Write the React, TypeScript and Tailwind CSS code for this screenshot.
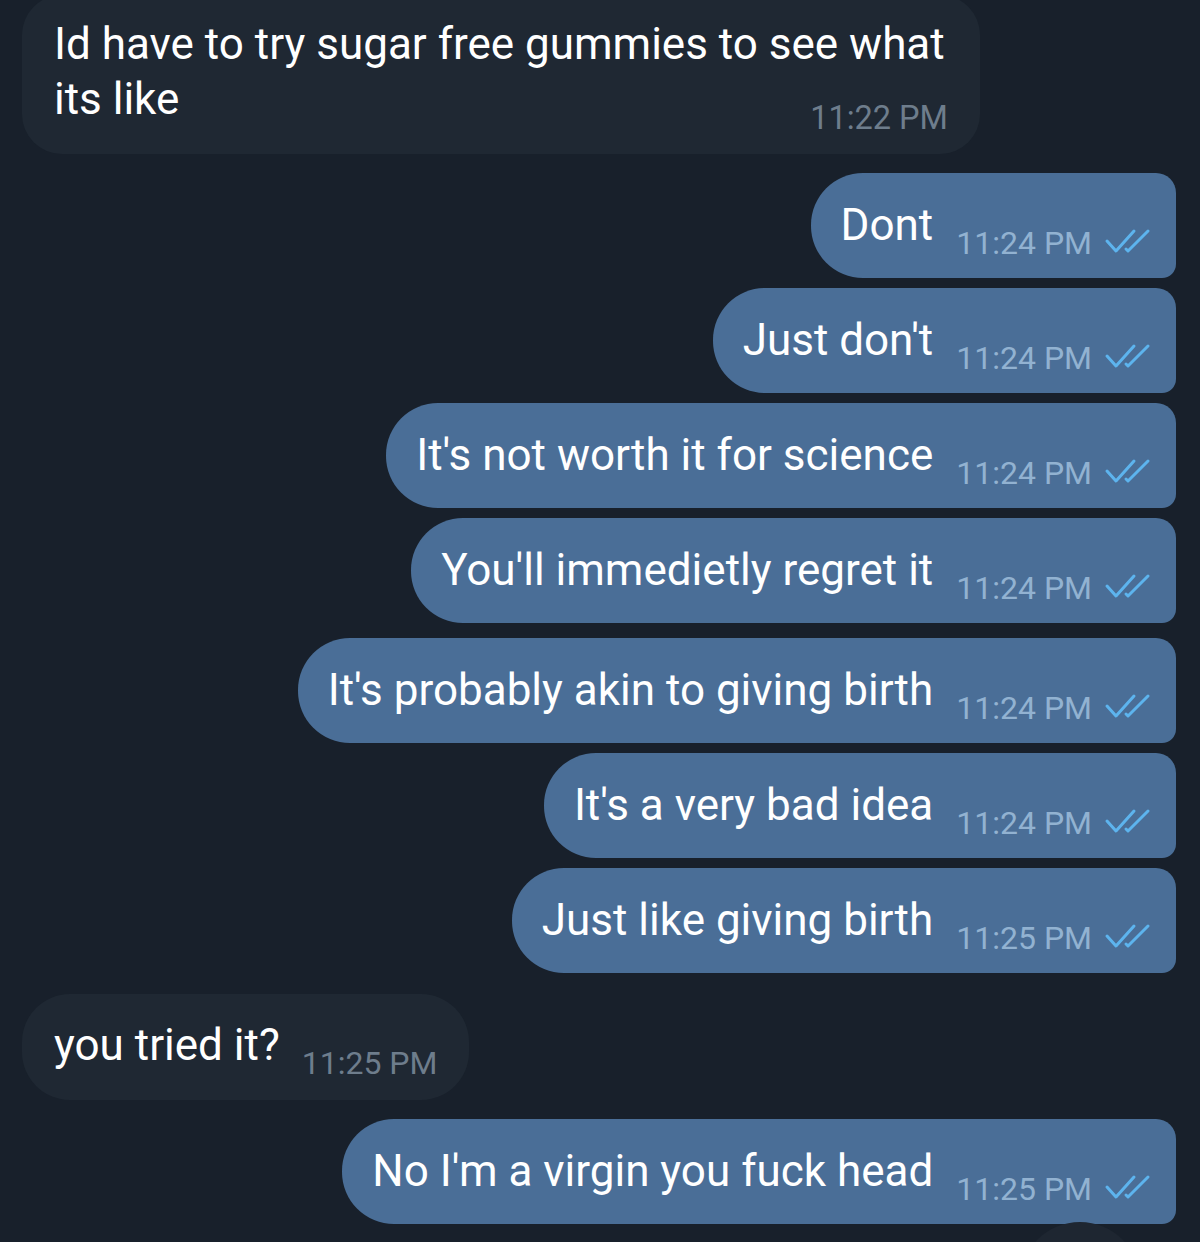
import React from "react";

type Msg = { text: string; time: string; out: boolean; gapTop: number };

const messages: Msg[] = [
  { text: "Dont", time: "11:24 PM", out: true, gapTop: 19 },
  { text: "Just don't", time: "11:24 PM", out: true, gapTop: 10 },
  { text: "It's not worth it for science", time: "11:24 PM", out: true, gapTop: 10 },
  { text: "You'll immedietly regret it", time: "11:24 PM", out: true, gapTop: 10 },
  { text: "It's probably akin to giving birth", time: "11:24 PM", out: true, gapTop: 15 },
  { text: "It's a very bad idea", time: "11:24 PM", out: true, gapTop: 10 },
  { text: "Just like giving birth", time: "11:25 PM", out: true, gapTop: 10 },
  { text: "you tried it?", time: "11:25 PM", out: false, gapTop: 21 },
  { text: "No I'm a virgin you fuck head", time: "11:25 PM", out: true, gapTop: 19 },
];

const DoubleCheck = () => (
  <svg width="48" height="26" viewBox="0 0 48 26" fill="none" stroke="#5db4ee" strokeWidth="3" strokeLinecap="round" strokeLinejoin="round">
    <path d="M3 13l9 10L30 3" />
    <path d="M22 21l2 2L44 3" />
  </svg>
);

const App: React.FC = () => {
  return (
    <div
      className="relative w-[1200px] h-[1242px] overflow-hidden bg-[#18202b] text-white"
      style={{ fontFamily: "Roboto, 'Noto Sans', sans-serif" }}
    >
      <div className="flex flex-col">
        {/* first incoming */}
        <div className="mt-[-5px] ml-[22px] w-[958px] h-[159px] rounded-[40px] bg-[#1f2833] pl-[32px] pr-[32px] pt-[22px] flex flex-col">
          <p className="text-[44px] leading-[55px] text-white">
            Id have to try sugar free gummies to see what
            <br />
            its like
          </p>
          <span className="self-end mt-[-25px] text-[32.5px] leading-none text-[#6e7d8c]">11:22 PM</span>
        </div>

        {messages.map((m, i) =>
          m.out ? (
            <div key={i} className="flex justify-end pr-[24px]" style={{ marginTop: m.gapTop }}>
              <div className="h-[105px] flex items-start bg-[#4a6e97] rounded-l-[52px] rounded-tr-[20px] rounded-br-[14px] pl-[30px] pr-[24px]">
                <span className="mt-[29px] text-[44px] leading-[46px] whitespace-nowrap">{m.text}</span>
                <span className="ml-[23px] mt-[53px] text-[32px] leading-[34px] text-[#92b2d1] whitespace-nowrap">{m.time}</span>
                <span className="ml-[12px] mt-[55px]">
                  <DoubleCheck />
                </span>
              </div>
            </div>
          ) : (
            <div key={i} className="flex justify-start pl-[22px]" style={{ marginTop: m.gapTop }}>
              <div className="h-[106px] flex items-start bg-[#1f2833] rounded-[48px] pl-[32px] pr-[32px]">
                <span className="mt-[28px] text-[44px] leading-[46px] whitespace-nowrap">{m.text}</span>
                <span className="ml-[22px] mt-[52px] text-[32px] leading-[34px] text-[#6e7d8c] whitespace-nowrap">{m.time}</span>
              </div>
            </div>
          )
        )}
      </div>

      {/* scroll-down button peeking at the bottom */}
      <div className="absolute left-[1020px] top-[1222px] w-[120px] h-[120px] rounded-full bg-[#1e2631]" />
    </div>
  );
};

export default App;
